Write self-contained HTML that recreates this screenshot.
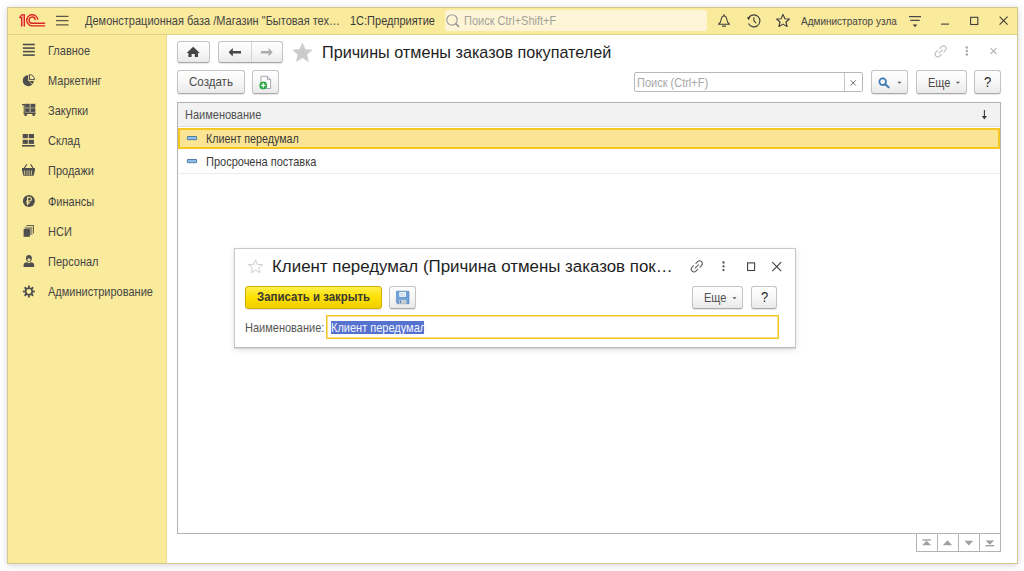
<!DOCTYPE html>
<html><head><meta charset="utf-8">
<style>
*{box-sizing:border-box;margin:0;padding:0}
html,body{width:1024px;height:571px;overflow:hidden;background:#fff;font-family:"Liberation Sans",sans-serif;color:#333}
.abs{position:absolute}
#win{position:absolute;left:7px;top:7px;width:1011px;height:557px;border:1px solid #d4c98a;background:#fff;box-shadow:0 1px 7px rgba(60,60,90,.22)}
#hdr{position:absolute;left:0;top:0;width:1009px;height:27px;background:#faea9b;border-bottom:1px solid #e2d086}
#side{position:absolute;left:0;top:27px;width:159px;height:528px;background:#faea9b;border-right:1px solid #ecdb8e}
.t{position:absolute;white-space:nowrap;line-height:1;font-size:11px;transform:scaleY(1.1);transform-origin:0 75%}
.btn{position:absolute;border:1px solid #c4c4c4;border-bottom-color:#a9a9a9;border-radius:3px;background:linear-gradient(#ffffff 0%,#f7f7f7 50%,#e9e9e9 100%);box-shadow:0 1px 1px rgba(0,0,0,.10)}
svg.ov{position:absolute;left:0;top:0;width:1024px;height:571px}
</style></head><body>
<div id="win">
  <div id="hdr"></div>
  <div id="side"></div>
</div>

<!-- header search box -->
<div class="abs" style="left:445px;top:10px;width:262px;height:21px;background:#fdf5d6;border-radius:3px"></div>

<!-- main top buttons -->
<div class="btn" style="left:177px;top:41px;width:33px;height:22px"></div>
<div class="btn" style="left:218px;top:41px;width:65px;height:22px"></div>
<div class="abs" style="left:251px;top:42px;width:1px;height:20px;background:#d4d4d4"></div>

<!-- toolbar -->
<div class="btn" style="left:177px;top:70px;width:68px;height:24px"></div>
<div class="btn" style="left:252px;top:70px;width:27px;height:24px"></div>
<div class="abs" style="left:634px;top:72px;width:229px;height:20px;border:1px solid #b8b8b8;border-radius:2px;background:#fff"></div>
<div class="abs" style="left:844px;top:73px;width:1px;height:18px;background:#c8c8c8"></div>
<div class="btn" style="left:871px;top:70px;width:37px;height:24px"></div>
<div class="btn" style="left:916px;top:70px;width:51px;height:24px"></div>
<div class="btn" style="left:974px;top:70px;width:27px;height:24px"></div>

<!-- table -->
<div class="abs" style="left:177px;top:102px;width:824px;height:432px;border:1px solid #b3b3b3;background:#fff"></div>
<div class="abs" style="left:178px;top:103px;width:822px;height:24px;background:#f2f2f2;border-bottom:1px solid #dedede"></div>
<div class="abs" style="left:178px;top:128px;width:822px;height:21px;background:#fbe494;border:2px solid #f6c621"></div>
<div class="abs" style="left:178px;top:173px;width:822px;height:1px;background:#ececec"></div>
<!-- nav arrows -->
<div class="abs" style="left:916px;top:534px;width:85px;height:18px;border:1px solid #b3b3b3;border-top:0;background:#fff"></div>
<div class="abs" style="left:937px;top:534px;width:1px;height:17px;background:#b3b3b3"></div>
<div class="abs" style="left:958px;top:534px;width:1px;height:17px;background:#b3b3b3"></div>
<div class="abs" style="left:979px;top:534px;width:1px;height:17px;background:#b3b3b3"></div>

<!-- dialog -->
<div class="abs" style="left:234px;top:248px;width:562px;height:100px;border:1px solid #c8c8c8;border-bottom-color:#bcbcbc;background:#fff;box-shadow:0 1px 1px rgba(0,0,0,.10),0 2px 7px rgba(0,0,0,.10)"></div>
<div class="abs" style="left:245px;top:286px;width:137px;height:23px;border:1px solid #d2ae00;border-radius:3px;background:linear-gradient(#fff04f,#fde000 50%,#f2cf00);box-shadow:0 1px 1px rgba(0,0,0,.12)"></div>
<div class="btn" style="left:389px;top:286px;width:27px;height:23px"></div>
<div class="btn" style="left:692px;top:286px;width:51px;height:23px"></div>
<div class="btn" style="left:751px;top:286px;width:26px;height:23px"></div>
<div class="abs" style="left:326px;top:315px;width:453px;height:24px;border:1px solid #f6c52a;box-shadow:inset 0 0 0 1px #fbe08a;background:#fff"></div>
<div class="abs" style="left:331px;top:321px;width:93px;height:12.5px;background:#5672cf"></div>

<svg class="ov" viewBox="0 0 1024 571">
  <!-- 1C logo -->
  <rect x="21.6" y="15" width="2.8" height="11.4" fill="#f0ad90"/>
  <g fill="none" stroke="#dd2326" stroke-width="1.25" stroke-linecap="butt" stroke-linejoin="miter">
    <path d="M21.6,26.6 V17.7 H19.4 M19.6,17.7 L21.6,14.8 H24.4 V26.6"/>
    <path d="M37.8,19.2 A5.6,5.6 0 1 0 32.6,25.9 H44.6" stroke-width="1.35" stroke-linecap="round"/>
    <path d="M35.2,19.6 A3.1,3.1 0 1 0 32.6,23.2 H44.6" stroke-width="1.35" stroke-linecap="round"/>
  </g>
  <!-- hamburger -->
  <g stroke="#5c5848" stroke-width="1.2">
    <path d="M56,16.3H68.5M56,20.6H68.5M56,24.9H68.5"/>
  </g>
  <!-- header search icon -->
  <g fill="none" stroke="#9c9c98" stroke-width="1.15">
    <circle cx="452" cy="19.9" r="5.2"/>
    <path d="M455.8,23.7 L458.4,26.3" stroke-width="1.8" stroke-linecap="round"/>
  </g>
  <!-- bell -->
  <g fill="none" stroke="#3d3d3d" stroke-width="1.05" stroke-linejoin="round">
    <path d="M724,15.9 C721.9,15.9 721.4,17.6 721.1,19.8 C720.8,22.3 720,23.4 718.5,24.3 H729.5 C728,23.4 727.2,22.3 726.9,19.8 C726.6,17.6 726.1,15.9 724,15.9 Z"/>
  </g>
  <circle cx="724" cy="15.1" r="0.85" fill="#3d3d3d"/>
  <path d="M722.6,26.2 H725.4" stroke="#3d3d3d" stroke-width="1.3" stroke-linecap="round"/>
  <!-- history -->
  <g fill="none" stroke="#3d3d3d" stroke-width="1.1">
    <path d="M749,17.4 A6,6 0 1 1 748.5,23.4"/>
    <path d="M753.9,17.3 V20.9 L756.3,23.1"/>
  </g>
  <path d="M746.9,17.4 L750.4,16.6 L748.9,20.2 Z" fill="#3d3d3d"/>
  <!-- header star -->
  <path d="M783,14.4 L784.9,18.7 L789.4,19 L786,22 L787.1,26.5 L783,24.1 L778.9,26.5 L780,22 L776.6,19 L781.1,18.7 Z" fill="none" stroke="#3d3d3d" stroke-width="1.1" stroke-linejoin="round"/>
  <!-- filter -->
  <g stroke="#4a4a4a" stroke-width="1.1"><path d="M909,16.6H921M910.3,20.4H919.7"/></g>
  <path d="M912.8,24.6 H917.2 L915,27.2 Z" fill="#3a3a3a"/>
  <!-- min / max / close -->
  <g fill="none" stroke="#3f3f3f" stroke-width="1.1">
    <path d="M941,24.1 H949"/>
    <rect x="970.6" y="17.3" width="7.2" height="7.2"/>
    <path d="M999.6,16.6 L1007.6,24.6 M1007.6,16.6 L999.6,24.6"/>
  </g>

  <!-- sidebar icons -->
  <g fill="#4e4e4e">
    <!-- Главное -->
    <rect x="22.9" y="43.7" width="11.9" height="1.6"/>
    <rect x="22.9" y="47.3" width="11.9" height="1.6"/>
    <rect x="22.9" y="50.8" width="11.9" height="1.6"/>
    <rect x="22.9" y="54.3" width="11.9" height="1.6"/>
    <!-- Маркетинг pie -->
    <path d="M28.2,80.6 V75 A5.6,5.6 0 1 0 32.2,84.6 Z"/>
    <path d="M29,81.1 L32.8,84 A5.6,5.6 0 0 0 33.8,81.1 Z"/>
    <path d="M29.5,79.6 V74.6 A5,5 0 0 1 34.5,79.6 Z" fill="none" stroke="#4e4e4e" stroke-width="1"/>
    <!-- Закупки cart -->
    <rect x="24.6" y="103.8" width="10.8" height="9.2" fill="#9e9878"/>
    <rect x="23.6" y="104" width="1.5" height="9.8" fill="#7d7860"/>
    <rect x="22" y="104" width="3" height="1.3"/>
    <rect x="25.3" y="103.9" width="4" height="3.4"/>
    <rect x="30.9" y="103.9" width="4.2" height="3.4"/>
    <rect x="25.3" y="108.5" width="4" height="3.4"/>
    <rect x="30.9" y="108.5" width="4.2" height="3.4"/>
    <rect x="23.6" y="112.8" width="12.2" height="1.2"/>
    <rect x="24.4" y="113.6" width="2.5" height="2.3"/>
    <rect x="32.4" y="113.6" width="2.5" height="2.3"/>
    <!-- Склад -->
    <rect x="22.7" y="134" width="5.1" height="4.2"/>
    <rect x="28.7" y="134" width="5.3" height="4.2"/>
    <rect x="22.7" y="139.8" width="5.1" height="4.1"/>
    <rect x="28.7" y="139.8" width="5.3" height="4.1"/>
    <rect x="22" y="145" width="12.8" height="1.6"/>
    <!-- Продажи basket -->
    <path d="M22,168 H35 V170 L33.6,175.8 H23.4 L22,170 Z"/>
    <path d="M26.8,164.2 L24.4,168 M30.6,164.2 L33,168" stroke="#4e4e4e" stroke-width="1.2" fill="none"/>
    <!-- Финансы ruble -->
    <circle cx="28.9" cy="200.9" r="6"/>
    <!-- НСИ -->
    <path d="M26.4,224.9 H34 V233.3 H33 V225.9 H26.4 Z" fill="#6a6550"/>
    <path d="M24.8,226.8 H32.5 V235 H24.8 Z" fill="#9e9878"/>
    <rect x="23.6" y="228.9" width="6.3" height="7.9"/>
    <!-- Персонал -->
    <path d="M26,258.6 C26,255.8 27.2,255 28.9,255 C30.6,255 31.8,255.8 31.8,258.6 C31.8,261 30.6,262 28.9,262 C27.2,262 26,261 26,258.6 Z"/>
    <path d="M23.6,267.1 V265 C23.6,263.4 25,262.4 27,262.2 L28.9,263.2 L30.8,262.2 C32.8,262.4 34.2,263.4 34.2,265 V267.1 Z"/>
  </g>
  <!-- basket slats -->
  <g stroke="#d8cf8e" stroke-width="0.9"><path d="M24.6,170.4V175M27,170.4V175.2M29.2,170.4V175.2M31.4,170.4V175.2"/></g>
  <!-- ruble glyph -->
  <g fill="none" stroke="#faea9b" stroke-width="1.1">
    <path d="M27.6,205.2 V197.3 H29.6 A1.85,1.85 0 0 1 29.6,201 H26.2 M26.2,202.9 H29.8"/>
  </g>
  <!-- face -->
  <ellipse cx="28.9" cy="259.8" rx="1.5" ry="1.6" fill="#faea9b"/>
  <!-- gear -->
  <g transform="translate(28.9,291.5)" fill="#4e4e4e">
    <circle r="4.1"/>
    <g id="teeth">
      <rect x="-0.9" y="-6" width="1.8" height="12"/>
      <rect x="-0.9" y="-6" width="1.8" height="12" transform="rotate(45)"/>
      <rect x="-0.9" y="-6" width="1.8" height="12" transform="rotate(90)"/>
      <rect x="-0.9" y="-6" width="1.8" height="12" transform="rotate(135)"/>
    </g>
    <circle r="2.4" fill="#faea9b"/>
  </g>

  <!-- home / back / forward -->
  <path d="M193.2,46.8 L199.8,52.9 H198 V57.1 H194.8 V54.1 H191.6 V57.1 H188.4 V52.9 H186.6 Z" fill="#454545"/>
  <path d="M228.6,52.2 L232.8,48 V50.9 H241 V53.5 H232.8 V56.4 Z" fill="#474747"/>
  <path d="M272.7,52.2 L268.5,48 V50.9 H260.9 V53.5 H268.5 V56.4 Z" fill="#acacac"/>
  <!-- title star -->
  <path d="M302.40,43.00 L305.10,49.48 L312.10,50.05 L306.77,54.62 L308.40,61.45 L302.40,57.80 L296.40,61.45 L298.03,54.62 L292.70,50.05 L299.70,49.48 Z" fill="#cbcbcb" stroke="#cbcbcb" stroke-width="0.6" stroke-linejoin="round"/>
  <!-- link / dots / close (main) -->
  <g fill="none" stroke="#bdbdbd" stroke-width="1.1" stroke-linecap="round" transform="translate(940.6,51.4) rotate(-45)">
    <path d="M-1.5,-2.75 H-3.9 A2.75,2.75 0 0 0 -3.9,2.75 H-1.5"/>
    <path d="M1.5,-2.75 H3.9 A2.75,2.75 0 0 1 3.9,2.75 H1.5"/>
    <path d="M-2.3,0 H2.3"/>
  </g>
  <path d="M990.6,48.2 L996.4,54 M996.4,48.2 L990.6,54" stroke="#b5b5b5" stroke-width="1.1"/>
  <g fill="#a9a9a9"><circle cx="966.8" cy="47.4" r="1.25"/><circle cx="966.8" cy="51" r="1.25"/><circle cx="966.8" cy="54.6" r="1.25"/></g>
  <!-- doc add icon -->
  <path d="M261,76.3 H267.3 L270.6,79.6 V88.5 H261 Z" fill="#fff" stroke="#9aa0aa" stroke-width="0.9"/>
  <path d="M267.3,76.3 V79.6 H270.6" fill="none" stroke="#9aa0aa" stroke-width="0.9"/>
  <circle cx="263.3" cy="85.4" r="3.9" fill="#2ea84a"/>
  <path d="M261.1,85.4 H265.5 M263.3,83.2 V87.6" stroke="#fff" stroke-width="1.3"/>
  <!-- search clear x -->
  <path d="M850.6,80.3 L855.8,85.5 M855.8,80.3 L850.6,85.5" stroke="#6a6a6a" stroke-width="1"/>
  <!-- search btn icon -->
  <g fill="none" stroke="#3a78b5" stroke-width="1.7">
    <circle cx="882.7" cy="81.7" r="3.3"/>
    <path d="M885.2,84.3 L888.6,87.3" stroke-width="2" stroke-linecap="round"/>
  </g>
  <path d="M897.4,81.8 H901.6 L899.5,83.8 Z" fill="#555"/>
  <path d="M955.8,81.8 H960 L957.9,83.8 Z" fill="#555"/>
  <!-- sort arrow -->
  <path d="M984.4,110 V118" stroke="#3a3a3a" stroke-width="1.1"/>
  <path d="M981.8,116 H987 L984.4,119.4 Z" fill="#3a3a3a"/>
  <!-- row icons -->
  <rect x="187.4" y="136.5" width="9.2" height="3.2" rx="0.3" fill="#8ec0ec" stroke="#44709a" stroke-width="0.9"/>
  <rect x="187.4" y="159.5" width="9.2" height="3.2" rx="0.3" fill="#8ec0ec" stroke="#44709a" stroke-width="0.9"/>
  <!-- nav icons -->
  <g fill="#a0a0a0">
    <rect x="922.4" y="539.3" width="8.4" height="1.4"/>
    <path d="M922.2,545.3 L926.6,540.7 L931,545.3 Z"/>
    <path d="M942.8,545.3 L947.5,540.3 L952.2,545.3 Z"/>
    <path d="M964.4,540.8 L973.2,540.8 L968.8,545.5 Z"/>
    <path d="M985.4,540.6 L994.2,540.6 L989.8,544.7 Z"/>
    <rect x="985.4" y="545" width="8.8" height="1.4"/>
  </g>

  <!-- dialog icons -->
  <path d="M255.5,259.8 L257.4,264.4 L262.6,264.6 L258.6,267.8 L259.9,272.8 L255.5,270 L251.1,272.8 L252.4,267.8 L248.4,264.6 L253.6,264.4 Z" fill="none" stroke="#c9c9c9" stroke-width="0.9" stroke-linejoin="round"/>
  <g fill="none" stroke="#5a5a5a" stroke-width="1" stroke-linecap="round" transform="translate(696.8,266.4) rotate(-45)">
    <path d="M-1.5,-2.75 H-3.9 A2.75,2.75 0 0 0 -3.9,2.75 H-1.5"/>
    <path d="M1.5,-2.75 H3.9 A2.75,2.75 0 0 1 3.9,2.75 H1.5"/>
    <path d="M-2.3,0 H2.3"/>
  </g>
  <g fill="#4a4a4a"><circle cx="723.5" cy="262.5" r="1.15"/><circle cx="723.5" cy="266.3" r="1.15"/><circle cx="723.5" cy="270.1" r="1.15"/></g>
  <rect x="747.6" y="262.9" width="7" height="7.6" fill="none" stroke="#3f3f3f" stroke-width="1.1"/>
  <path d="M772.3,262.2 L781.2,271.1 M781.2,262.2 L772.3,271.1" stroke="#3f3f3f" stroke-width="1.1"/>
  <!-- floppy -->
  <path d="M396.4,291.2 H409 V303.7 H397.6 L396.4,302.5 Z" fill="#6f9fd8" stroke="#4f7fb8" stroke-width="0.6"/>
  <rect x="399.3" y="292" width="6.6" height="4.8" fill="#fff"/>
  <path d="M400,293.6 H405.2 M400,295.2 H405.2" stroke="#9bb6d6" stroke-width="0.6"/>
  <rect x="399.2" y="299.8" width="7.2" height="3.9" fill="#c9cfcf"/>
  <rect x="400" y="300.4" width="1" height="2.6" fill="#4f7fb8"/>
  <path d="M732.4,297.2 H736.6 L734.5,299.2 Z" fill="#555"/>
</svg>

<!-- header texts -->
<div class="t" style="left:85px;top:15.6px;color:#454545">Демонстрационная база /Магазин "Бытовая тех…</div>
<div class="t" style="left:350px;top:15.6px;color:#3a3a3a">1С:Предприятие</div>
<div class="t" style="left:464px;top:16px;color:#a3a29a">Поиск Ctrl+Shift+F</div>
<div class="t" style="left:801px;top:16.6px;font-size:10px;color:#454545;transform:none">Администратор узла</div>

<!-- sidebar -->
<div class="t" style="left:48px;top:45.7px;color:#454545">Главное</div>
<div class="t" style="left:48px;top:76px;color:#454545">Маркетинг</div>
<div class="t" style="left:48px;top:106px;color:#454545">Закупки</div>
<div class="t" style="left:48px;top:136px;color:#454545">Склад</div>
<div class="t" style="left:48px;top:166px;color:#454545">Продажи</div>
<div class="t" style="left:48px;top:196.6px;color:#454545">Финансы</div>
<div class="t" style="left:48px;top:226.6px;color:#454545">НСИ</div>
<div class="t" style="left:48px;top:257px;color:#454545">Персонал</div>
<div class="t" style="left:48px;top:287px;color:#454545">Администрирование</div>

<!-- main -->
<div class="t" style="left:322px;top:44px;font-size:16.2px;color:#1e1e1e;transform:none">Причины отмены заказов покупателей</div>
<div class="t" style="left:189px;top:77.4px;color:#4a4a4a;transform:scale(1.05,1.1)">Создать</div>
<div class="t" style="left:637px;top:78px;color:#a6a6a6">Поиск (Ctrl+F)</div>
<div class="t" style="left:928px;top:78px;color:#4a4a4a">Еще</div>
<div class="t" style="left:984px;top:76px;font-size:13px;color:#222">?</div>
<div class="t" style="left:185px;top:110px;color:#505050">Наименование</div>
<div class="t" style="left:206px;top:134px;color:#3a3a3a;transform:scale(0.975,1.1)">Клиент передумал</div>
<div class="t" style="left:206px;top:157px;color:#3a3a3a">Просрочена поставка</div>

<!-- dialog texts -->
<div class="t" style="left:272px;top:259px;font-size:16.9px;color:#1e1e1e;transform:none">Клиент передумал (Причина отмены заказов пок…</div>
<div class="t" style="left:257px;top:292px;font-size:11.3px;font-weight:bold;color:#3a3a32;transform:scale(1.01,1.1)">Записать и закрыть</div>
<div class="t" style="left:704px;top:293px;color:#505050">Еще</div>
<div class="t" style="left:761px;top:291px;font-size:13px;color:#222">?</div>
<div class="t" style="left:245px;top:323px;color:#555">Наименование:</div>
<div class="t" style="left:331px;top:322.6px;color:#f4f6ff">Клиент передумал</div>
</body></html>
